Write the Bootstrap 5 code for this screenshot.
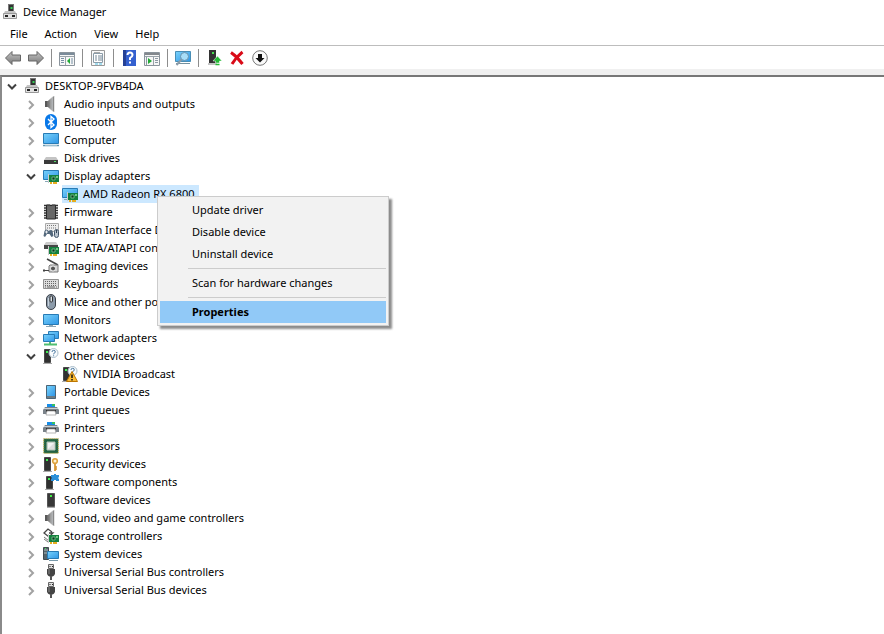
<!DOCTYPE html>
<html lang="en">
<head>
<meta charset="utf-8">
<meta name="viewport" content="width=device-width, initial-scale=1">
<title>Device Manager</title>
<link href="https://cdn.jsdelivr.net/npm/bootstrap@5.3.0/dist/css/bootstrap.min.css" rel="stylesheet">
<style>
  body { font-family: "Noto Sans", "Open Sans", sans-serif; font-size: 11px; line-height: 18px; color: #000; background: #fff; }
  button { border: 0; background: none; padding: 0; color: inherit; }
  .titlebar { height: 24px; padding-left: 2px; gap: 5px; }
  .titlebar h1 { font-size: 11px; line-height: 18px; font-weight: 400; }
  .menubar { height: 21px; padding: 0 0 2px 4px; gap: 5px; }
  .menubar button { padding: 0 6px; }
  .toolbar { height: 24px; padding-left: 4px; border-top: 1px solid #bdbdbd; }
  .toolbar button { display: flex; width: 18px; height: 18px; align-items: center; justify-content: center; }
  .toolbar button + button { margin-left: 5px; }
  .toolbar svg { width: 18px; height: 18px; }
  .vline { width: 1px; height: 18px; margin: 0 6px; background: #8d8d8d; }
  .strip { background: #f0f0f0; padding-top: 6px; }
  .panel { border-top: 2px solid #777; border-left: 2px solid #8a8a8a; background: #fff; }
  .tree-list { list-style: none; margin: 0; padding: 0; }
  .tree-list .tree-list { padding-left: 19px; }
  .device { display: flex; align-items: center; height: 18px; padding-left: 2px; white-space: nowrap; }
  .twisty { width: 16px; height: 18px; display: flex; align-items: center; justify-content: center; margin-right: 4px; flex: none; }
  .twisty svg { width: 10px; height: 10px; fill: none; stroke: #a2a2a2; stroke-width: 2; margin-top: 2px; }
  .twisty[aria-expanded="true"] svg { stroke: #404040; }
  .glyph { width: 16px; height: 16px; flex: none; }
  .device > .glyph { margin-right: 5px; }
  .leaf { padding-left: 22px; }
  .chosen { background: #cce8ff; display: flex; height: 18px; align-items: center; padding-right: 4px; gap: 5px; }
  .context { position: absolute; z-index: 5; top: 11px; left: 117px; width: 232px; padding: 2px; background: #f2f2f2; border: 1px solid #ccc; box-shadow: 3px 3px 2px rgba(0,0,0,.45); }
  .context button { display: block; width: 100%; height: 22px; line-height: 20px; padding-left: 32px; text-align: left; }
  .context .current { background: #91c9f7; font-weight: 700; line-height: 22px; }
  .context hr { margin: 3px 0 3px 28px; border-top: 1px solid #ccc; opacity: 1; }
</style>
</head>
<body class="d-flex flex-column min-vh-100">
<svg class="position-absolute" width="0" height="0" aria-hidden="true">
  <defs>
    <linearGradient id="blue" x2="1" y2="1"><stop stop-color="#79d2fb"/><stop offset="1" stop-color="#2f96e6"/></linearGradient>
    <linearGradient id="grey" x2="0" y2="1"><stop stop-color="#c5c5c5"/><stop offset="1" stop-color="#777"/></linearGradient>
    <linearGradient id="cone"><stop stop-color="#555"/><stop offset=".35" stop-color="#999"/><stop offset="1" stop-color="#bfc3c6"/></linearGradient>
  </defs>
  <symbol id="right" viewBox="0 0 10 10"><path d="M3 1l4 4-4 4"/></symbol>
  <symbol id="down" viewBox="0 0 10 10"><path d="M1 2.500l4 4 4-4"/></symbol>
  <symbol id="pc" viewBox="0 0 16 16"><path d="M6 0h6v8H6z" fill="#777"/><path d="M7 1h4v6H7z" fill="#333"/><path d="M8.500 3h2v2h-2z" fill="#3c5"/><path d="M3 7h10l1.500 3H1.500z" fill="#c4c4c4"/><path d="M1.500 9.500h13v5h-13z" fill="#e2e2e2" stroke="#999"/><path d="M3 11h3v2H3zM10 11h3v2h-3z" fill="#222"/></symbol>
  <symbol id="speaker" viewBox="0 0 16 16"><path d="M2 5h3v6H2z" fill="#595959"/><path d="M5 5l6-5v16l-6-5z" fill="url(#cone)" stroke="#aaa" stroke-width=".6"/><path d="M10.500 1v14" stroke="#888"/></symbol>
  <symbol id="bluetooth" viewBox="0 0 16 16"><rect x="2" width="12" height="16" rx="6" fill="#0878e8"/><path d="M5 5l6 6-3 2.500v-11L11 5l-6 6" fill="none" stroke="#fff" stroke-width="1.300"/></symbol>
  <symbol id="screen" viewBox="0 0 16 16"><path d="M.5 2.500h15v10H.5z" fill="url(#blue)" stroke="#287bb5"/><path d="M6 13h4v1H6zM3 14h10v1H3z" fill="#8ca6b5"/></symbol>
  <symbol id="computer" viewBox="0 0 16 16"><path d="M.5 1.500h15v10H.5z" fill="url(#blue)" stroke="#287bb5"/><path d="M0 13.500h16" stroke="#6496b0" stroke-width="1.500"/><path d="M2 13.500h12" stroke="#c8dbe3" stroke-width=".6"/></symbol>
  <symbol id="disk" viewBox="0 0 16 16"><path d="M3 7h10l2 3H1z" fill="#c4c4c4"/><path d="M1 10h14v4H1z" fill="#3a3a3a"/><path d="M11 11h2v1h-2z" fill="#52df68"/></symbol>
  <symbol id="card" viewBox="0 0 16 16"><path d="M6 7h10v7H6z" fill="#15803f"/><path d="M5.500 6v9" stroke="#ccc"/><path d="M9 9h3v3H9z" fill="#073a1e" stroke="#8bd09b" stroke-width=".7"/><path d="M13 8h2v2h-2z" fill="#72c984"/><path d="M7 14h2v2H7zM10 14h4v2h-4z" fill="#e6ae20"/></symbol>
  <symbol id="display" viewBox="0 0 16 16"><path d="M.5 2.500h15v9H.5z" fill="url(#blue)" stroke="#287bb5"/><path d="M2 13.500h5" stroke="#8ba8b8"/><use href="#card"/></symbol>
  <symbol id="chip" viewBox="0 0 16 16"><path d="M1 1.500h14M1 4h14M1 6.500h14M1 9h14M1 11.500h14M1 14h14" stroke="#333" stroke-width="1.300"/><path d="M3.500 1H7q1 2 2 0h3.500v14h-9z" fill="#666" stroke="#292929"/></symbol>
  <symbol id="hid" viewBox="0 0 16 16"><path d="M2.500 1.500h13v8h-13z" fill="#ededed" stroke="#aaa"/><path d="M4 3.500h10M4 6h10" stroke="#777" stroke-dasharray="1 1"/><path d="M.5 14l1-5q2-3 4 0 3-2 4 0l1 5-2 1-2-3H4l-2 3z" fill="#53687c"/><path d="M2 10h3M3.500 8.500v3" stroke="#fff" stroke-width=".8"/><rect x="11.500" y="7.500" width="4" height="8" rx="2" fill="#b9c4cf" stroke="#43566a"/><path d="M13.500 8v3" stroke="#345"/></symbol>
  <symbol id="ide" viewBox="0 0 16 16"><path d="M3 2h10l2 3H1z" fill="#ccc"/><path d="M1 5h14v4H1z" fill="#474747"/><use href="#card"/></symbol>
  <symbol id="camera" viewBox="0 0 16 16"><path d="M4 1l11 6" stroke="#444" stroke-width="1.500"/><path d="M7 7h8v7H6V8z" fill="#d6d6d6" stroke="#777"/><circle cx="10" cy="10.500" r="2.500" fill="#555" stroke="#eee"/><path d="M0 12.500h6M1 11v3" stroke="#444"/></symbol>
  <symbol id="keyboard" viewBox="0 0 16 16"><path d="M.5 3.500h15v9H.5z" fill="#ddd" stroke="#919191"/><path d="M2 5.500h12M2 7.500h12M2 9.500h12" stroke="#666" stroke-dasharray="1 1"/><path d="M2 11h1M4 11h8M13 11h1" stroke="#666"/></symbol>
  <symbol id="mouse" viewBox="0 0 16 16"><rect x="3.500" y=".5" width="9" height="15" rx="4.500" fill="#8c9baa" stroke="#3b4149"/><path d="M5.500 4v8" stroke="#c6d1dc"/><rect x="7" y="2" width="2.500" height="6" rx="1" fill="#d7e0e8" stroke="#333"/></symbol>
  <symbol id="network" viewBox="0 0 16 16"><path d="M5.500 1.500h10v7h-10z" fill="url(#blue)" stroke="#287bb5"/><path d="M.5 4.500h11v7H.5z" fill="url(#blue)" stroke="#287bb5"/><path d="M7 12v3M1 14.500h13" stroke="#50bd70" stroke-width="2"/></symbol>
  <symbol id="tower" viewBox="0 0 16 16"><path d="M4.500 1.500h7v13h-7z" fill="#383838" stroke="#555"/><path d="M7 3h2v2H7z" fill="#40ee45"/><path d="M4 15.500h8" stroke="#aaa"/></symbol>
  <symbol id="tower-left" viewBox="0 0 16 16"><path d="M1.500 1.500h6v13h-6z" fill="#303030" stroke="#484848"/><path d="M3 3h2v2H3z" fill="#3dec50"/><path d="M0 15.500h9" stroke="#aaa"/></symbol>
  <symbol id="query" viewBox="0 0 16 16"><use href="#tower-left"/><circle cx="10.500" cy="5" r="4.500" fill="#f8fbfd" stroke="#a9bdca"/><path d="M9 4q0-1.700 1.700-1.700T12.300 4q0 .8-1.700 1.700v.6m0 1v1" fill="none" stroke="#4b78a0"/></symbol>
  <symbol id="warning" viewBox="0 0 16 16"><use href="#query"/><path d="M10 5.500l5.500 10h-11z" fill="#f9bc36" stroke="#bd7600"/><path d="M10 8.500v3.500m0 1v1.500" stroke="#111" stroke-width="1.500"/></symbol>
  <symbol id="portable" viewBox="0 0 16 16"><path d="M3.500 1.500h9v13h-9z" fill="#333" stroke="#4a6477"/><path d="M4 2h8v10H4z" fill="url(#blue)"/><path d="M4 13h8" stroke="#a5c3d4"/></symbol>
  <symbol id="printer" viewBox="0 0 16 16"><path d="M4 2h8v4H4z" fill="#168ce8"/><path d="M9 2h3v2H9z" fill="#37c05f"/><path d="M2 5h12l2 3v4H0V8z" fill="#7a8289"/><path d="M1 6.500h14" stroke="#cbd1d5"/><path d="M3 8h10v2H3z" fill="#333"/><path d="M4 9h8l1 4H3z" fill="#fff" stroke="#999" stroke-width=".7"/></symbol>
  <symbol id="cpu" viewBox="0 0 16 16"><path d="M.7.7h14.600v14.600H.7z" fill="#226344" stroke="#c9ad42" stroke-dasharray="1 1"/><path d="M4 4h8v8H4z" fill="#ddd" stroke="#b4c5b8"/><path d="M5 11V5h6z" fill="#f3f3f3"/></symbol>
  <symbol id="security" viewBox="0 0 16 16"><use href="#tower-left"/><circle cx="12" cy="5" r="2.300" fill="#fff2cf" stroke="#dca13c" stroke-width="1.600"/><path d="M12 8v7M12 11h2M12 13h2" stroke="#d5922c" stroke-width="1.700"/></symbol>
  <symbol id="component" viewBox="0 0 16 16"><path d="M3.500 2.500h6v12h-6z" fill="#303030" stroke="#484848"/><path d="M5 4h2v2H5z" fill="#3dec50"/><path d="M2 15.500h9" stroke="#aaa"/><path d="M8 1h3V0h2v1h3v2.500h-1v1h1V7h-3V6h-2v1H8V4.500h1v-1H8z" fill="#2d90d9"/></symbol>
  <symbol id="storage" viewBox="0 0 16 16"><path d="M9 4L5 1 1 5l5 4 4-4H6" fill="none" stroke="#444" stroke-width="1.300"/><path d="M1 9l5 4M1 11l4 3" stroke="#777"/><use href="#card"/></symbol>
  <symbol id="system" viewBox="0 0 16 16"><path d="M.5 1.500h5v12h-5z" fill="#54646b" stroke="#404a4f"/><path d="M1 4h4M1 7h4" stroke="#a9b7bc"/><path d="M2 2h1v1H2z" fill="#45e855"/><path d="M4.500 5.500h11v7h-11z" fill="url(#blue)" stroke="#287bb5"/><path d="M6 14.500h9" stroke="#7899aa"/></symbol>
  <symbol id="usb" viewBox="0 0 16 16"><path d="M5.500.5h5v4h-5z" fill="#ddd" stroke="#666"/><path d="M6.500 2h1v1h-1zM9 2h1v1H9z" fill="#222"/><path d="M4 5h8v5q-1 2-2.500 2.500h-3Q5 12 4 10z" fill="#444"/><path d="M6 5v5" stroke="#888"/><path d="M8 12v4" stroke="#555" stroke-width="2"/></symbol>
  <symbol id="t-back" viewBox="0 0 18 18"><path d="M1.500 9L8 2.500V6h8.500v6H8v3.500z" fill="url(#grey)" stroke="#666"/></symbol>
  <symbol id="t-forward" viewBox="0 0 18 18"><path d="M16.500 9L10 2.500V6H1.500v6H10v3.500z" fill="url(#grey)" stroke="#666"/></symbol>
  <symbol id="t-tree" viewBox="0 0 18 18"><path d="M1.500 3.500h15v13h-15z" fill="#f7f7f7" stroke="#8b949c"/><path d="M2 5h14" stroke="#7b8c9a" stroke-width="2"/><path d="M2 7.500h14M7.500 8v8" stroke="#9aa3aa"/><path d="M3 9.500h3M3 11.500h3M3 13.500h3M14 9v6" stroke="#768fa4"/><path d="M12 9v6l-3-3z" fill="#21aa35"/></symbol>
  <symbol id="t-props" viewBox="0 0 18 18"><path d="M2.500 1.500h13v15h-13z" fill="#fafafa" stroke="#999"/><path d="M4.500 4.500h9v9h-9z" fill="#fff" stroke="#8b9ca9"/><path d="M5 3.500h6" stroke="#aaa"/><path d="M6 7h2M9 7h4M6 9h2M9 9h4M6 11h2M9 11h4" stroke="#748796"/><path d="M6 15h3M10 15h3" stroke="#4bbce0"/></symbol>
  <symbol id="t-help" viewBox="0 0 18 18"><path d="M3 1h13v16H3z" fill="#3460cf"/><path d="M3 1h3v16H3z" fill="#254196"/><path d="M7.500 6q0-2.500 2.500-2.500T12.500 6Q12.500 7.500 10 9v2m0 1.500v2" fill="none" stroke="#fff" stroke-width="2"/></symbol>
  <symbol id="t-pane" viewBox="0 0 18 18"><path d="M1.500 3.500h15v13h-15z" fill="#f7f7f7" stroke="#8b949c"/><path d="M2 5h14" stroke="#83888d" stroke-width="2"/><path d="M2 7.500h14M10.500 8v8" stroke="#9aa3aa"/><path d="M3.500 8v8M12 9.500h3M12 11.500h3M12 13.500h3" stroke="#8d9aa5"/><path d="M5 9v6l4-3z" fill="#21aa35"/></symbol>
  <symbol id="t-scan" viewBox="0 0 18 18"><path d="M1.500 2.500h15v10h-15z" fill="url(#blue)" stroke="#488eb6"/><path d="M2 14.500h14" stroke="#75919f"/><circle cx="10.500" cy="7.500" r="4" fill="#a8def8" stroke="#6892ad"/><path d="M7.500 10.500l-5 5.500" stroke="#8b9ba8" stroke-width="2"/></symbol>
  <symbol id="t-update" viewBox="0 0 18 18"><path d="M4 1h7v13H4z" fill="#333"/><path d="M7 3h2v2H7z" fill="#48df50"/><path d="M3 15h9" stroke="#888"/><path d="M12.500 7l4.500 5h-2.500v2h-4v-2H8z" fill="#24ba35" stroke="#fff" stroke-width=".5"/><path d="M10.500 15.500h4" stroke="#24ba35" stroke-width="1.500"/></symbol>
  <symbol id="t-remove" viewBox="0 0 18 18"><path d="M3 3.500q6 4 11.500 11.500M14.500 3Q8 8 4 15" fill="none" stroke="#d90b18" stroke-width="3"/></symbol>
  <symbol id="t-disable" viewBox="0 0 18 18"><circle cx="9" cy="9" r="7.300" fill="#fafafa" stroke="#777"/><path d="M7 5h4v4h2.500L9 13.500 4.500 9H7z" fill="#111"/></symbol>
</svg>

<header>
  <div class="titlebar d-flex align-items-center"><svg class="glyph"><use href="#pc"/></svg><h1 class="m-0">Device Manager</h1></div>
  <nav class="menubar d-flex align-items-center" aria-label="Menu bar">
    <button type="button">File</button><button type="button">Action</button><button type="button">View</button><button type="button">Help</button>
  </nav>
  <div class="toolbar d-flex align-items-center" role="toolbar" aria-label="Tools">
    <button type="button" aria-label="Back"><svg><use href="#t-back"/></svg></button>
    <button type="button" aria-label="Forward"><svg><use href="#t-forward"/></svg></button>
    <span class="vline"></span>
    <button type="button" aria-label="Show console tree"><svg><use href="#t-tree"/></svg></button>
    <span class="vline"></span>
    <button type="button" aria-label="Properties"><svg><use href="#t-props"/></svg></button>
    <span class="vline"></span>
    <button type="button" aria-label="Help contents"><svg><use href="#t-help"/></svg></button>
    <button type="button" aria-label="Show action pane"><svg><use href="#t-pane"/></svg></button>
    <span class="vline"></span>
    <button type="button" aria-label="Scan for changes"><svg><use href="#t-scan"/></svg></button>
    <span class="vline"></span>
    <button type="button" aria-label="Update driver"><svg><use href="#t-update"/></svg></button>
    <button type="button" aria-label="Uninstall"><svg><use href="#t-remove"/></svg></button>
    <button type="button" aria-label="Disable"><svg><use href="#t-disable"/></svg></button>
  </div>
</header>

<main class="strip flex-grow-1 d-flex flex-column">
  <div class="panel flex-grow-1">
    <ul class="tree-list">
      <li>
        <div class="device"><button type="button" class="twisty" aria-expanded="true" aria-label="Collapse"><svg><use href="#down"/></svg></button><svg class="glyph"><use href="#pc"/></svg>DESKTOP-9FVB4DA</div>
        <ul class="tree-list">
          <li class="device"><button type="button" class="twisty" aria-label="Expand"><svg><use href="#right"/></svg></button><svg class="glyph"><use href="#speaker"/></svg>Audio inputs and outputs</li>
          <li class="device"><button type="button" class="twisty" aria-label="Expand"><svg><use href="#right"/></svg></button><svg class="glyph"><use href="#bluetooth"/></svg>Bluetooth</li>
          <li class="device"><button type="button" class="twisty" aria-label="Expand"><svg><use href="#right"/></svg></button><svg class="glyph"><use href="#computer"/></svg>Computer</li>
          <li class="device"><button type="button" class="twisty" aria-label="Expand"><svg><use href="#right"/></svg></button><svg class="glyph"><use href="#disk"/></svg>Disk drives</li>
          <li>
            <div class="device"><button type="button" class="twisty" aria-expanded="true" aria-label="Collapse"><svg><use href="#down"/></svg></button><svg class="glyph"><use href="#display"/></svg>Display adapters</div>
            <ul class="tree-list">
              <li class="device leaf position-relative">
                <span class="chosen"><svg class="glyph"><use href="#display"/></svg>AMD Radeon RX 6800</span>
                <div class="context" role="menu">
                  <button type="button" role="menuitem">Update driver</button>
                  <button type="button" role="menuitem">Disable device</button>
                  <button type="button" role="menuitem">Uninstall device</button>
                  <hr>
                  <button type="button" role="menuitem">Scan for hardware changes</button>
                  <hr>
                  <button type="button" role="menuitem" class="current">Properties</button>
                </div>
              </li>
            </ul>
          </li>
          <li class="device"><button type="button" class="twisty" aria-label="Expand"><svg><use href="#right"/></svg></button><svg class="glyph"><use href="#chip"/></svg>Firmware</li>
          <li class="device"><button type="button" class="twisty" aria-label="Expand"><svg><use href="#right"/></svg></button><svg class="glyph"><use href="#hid"/></svg>Human Interface Devices</li>
          <li class="device"><button type="button" class="twisty" aria-label="Expand"><svg><use href="#right"/></svg></button><svg class="glyph"><use href="#ide"/></svg>IDE ATA/ATAPI controllers</li>
          <li class="device"><button type="button" class="twisty" aria-label="Expand"><svg><use href="#right"/></svg></button><svg class="glyph"><use href="#camera"/></svg>Imaging devices</li>
          <li class="device"><button type="button" class="twisty" aria-label="Expand"><svg><use href="#right"/></svg></button><svg class="glyph"><use href="#keyboard"/></svg>Keyboards</li>
          <li class="device"><button type="button" class="twisty" aria-label="Expand"><svg><use href="#right"/></svg></button><svg class="glyph"><use href="#mouse"/></svg>Mice and other pointing devices</li>
          <li class="device"><button type="button" class="twisty" aria-label="Expand"><svg><use href="#right"/></svg></button><svg class="glyph"><use href="#screen"/></svg>Monitors</li>
          <li class="device"><button type="button" class="twisty" aria-label="Expand"><svg><use href="#right"/></svg></button><svg class="glyph"><use href="#network"/></svg>Network adapters</li>
          <li>
            <div class="device"><button type="button" class="twisty" aria-expanded="true" aria-label="Collapse"><svg><use href="#down"/></svg></button><svg class="glyph"><use href="#query"/></svg>Other devices</div>
            <ul class="tree-list">
              <li class="device leaf"><svg class="glyph"><use href="#warning"/></svg>NVIDIA Broadcast</li>
            </ul>
          </li>
          <li class="device"><button type="button" class="twisty" aria-label="Expand"><svg><use href="#right"/></svg></button><svg class="glyph"><use href="#portable"/></svg>Portable Devices</li>
          <li class="device"><button type="button" class="twisty" aria-label="Expand"><svg><use href="#right"/></svg></button><svg class="glyph"><use href="#printer"/></svg>Print queues</li>
          <li class="device"><button type="button" class="twisty" aria-label="Expand"><svg><use href="#right"/></svg></button><svg class="glyph"><use href="#printer"/></svg>Printers</li>
          <li class="device"><button type="button" class="twisty" aria-label="Expand"><svg><use href="#right"/></svg></button><svg class="glyph"><use href="#cpu"/></svg>Processors</li>
          <li class="device"><button type="button" class="twisty" aria-label="Expand"><svg><use href="#right"/></svg></button><svg class="glyph"><use href="#security"/></svg>Security devices</li>
          <li class="device"><button type="button" class="twisty" aria-label="Expand"><svg><use href="#right"/></svg></button><svg class="glyph"><use href="#component"/></svg>Software components</li>
          <li class="device"><button type="button" class="twisty" aria-label="Expand"><svg><use href="#right"/></svg></button><svg class="glyph"><use href="#tower"/></svg>Software devices</li>
          <li class="device"><button type="button" class="twisty" aria-label="Expand"><svg><use href="#right"/></svg></button><svg class="glyph"><use href="#speaker"/></svg>Sound, video and game controllers</li>
          <li class="device"><button type="button" class="twisty" aria-label="Expand"><svg><use href="#right"/></svg></button><svg class="glyph"><use href="#storage"/></svg>Storage controllers</li>
          <li class="device"><button type="button" class="twisty" aria-label="Expand"><svg><use href="#right"/></svg></button><svg class="glyph"><use href="#system"/></svg>System devices</li>
          <li class="device"><button type="button" class="twisty" aria-label="Expand"><svg><use href="#right"/></svg></button><svg class="glyph"><use href="#usb"/></svg>Universal Serial Bus controllers</li>
          <li class="device"><button type="button" class="twisty" aria-label="Expand"><svg><use href="#right"/></svg></button><svg class="glyph"><use href="#usb"/></svg>Universal Serial Bus devices</li>
        </ul>
      </li>
    </ul>
  </div>
</main>
<script src="https://cdn.jsdelivr.net/npm/bootstrap@5.3.0/dist/js/bootstrap.bundle.min.js"></script>
</body>
</html>
